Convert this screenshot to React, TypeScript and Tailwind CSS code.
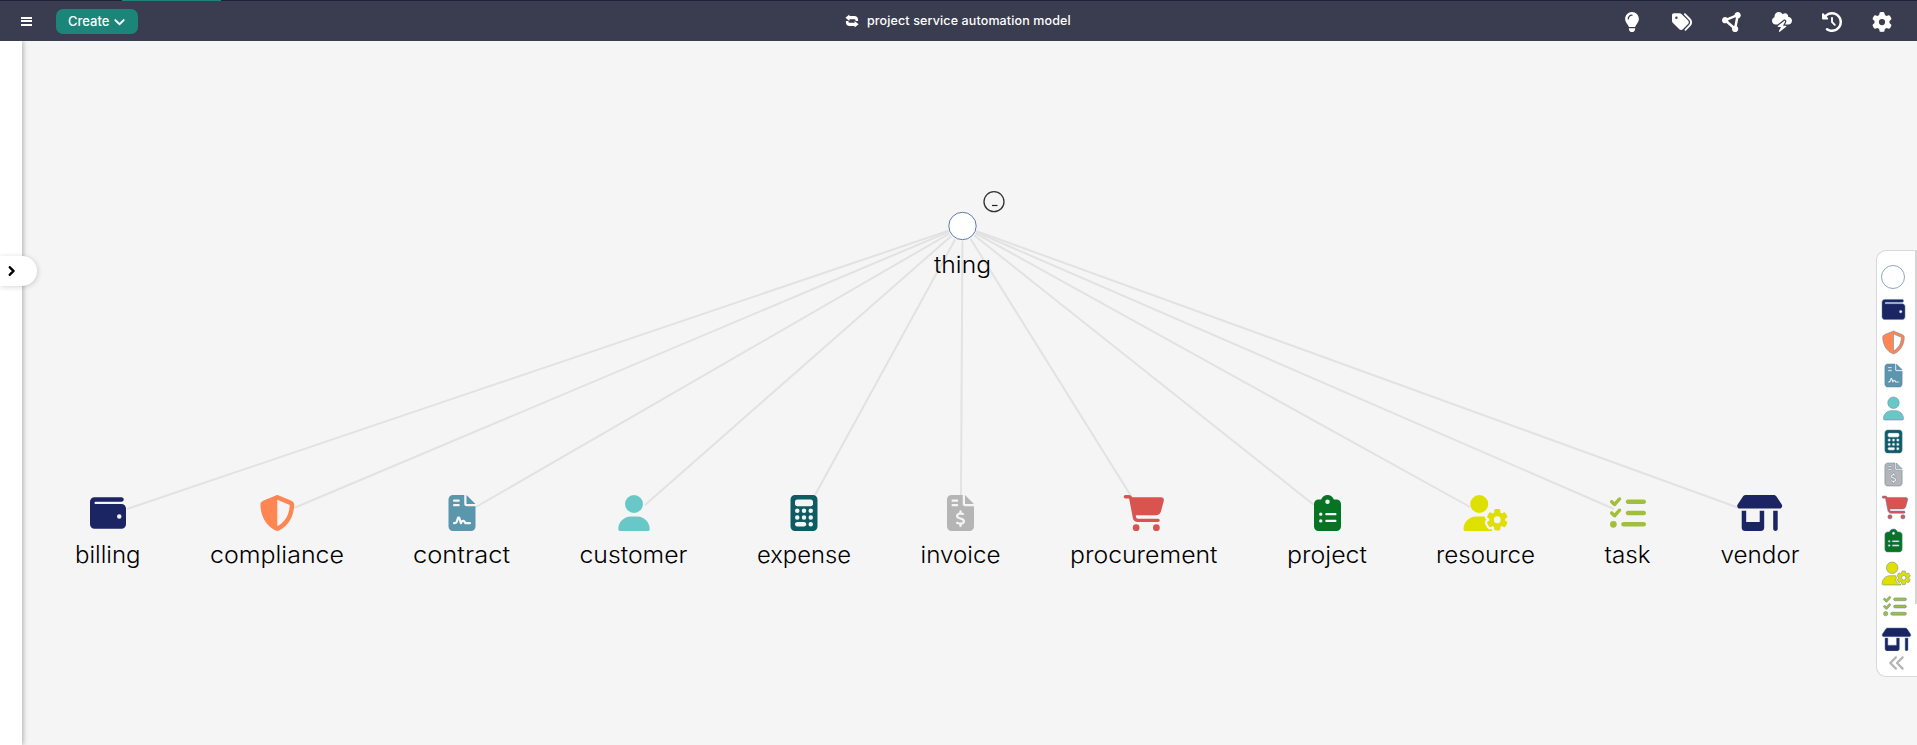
import React from "react";
import type { IconType } from "react-icons";
import {
  FaAnglesLeft, FaCalculator, FaCartShopping, FaChevronDown, FaChevronRight, FaCircleNodes,
  FaClipboardList, FaClockRotateLeft, FaCloudBolt, FaFileContract, FaFileInvoiceDollar, FaGear,
  FaLightbulb, FaListCheck, FaShieldHalved, FaShop, FaTags, FaUser, FaUserGear, FaWallet,
} from "react-icons/fa6";

type ModelNode = {
  label: string;
  icon: IconType;
  color: string;
  x: number;
  labelX: number;
  labelWidth: number;
  edge: [number, number];
};

const nodes: ModelNode[] = [
  { label: "billing", icon: FaWallet, color: "#1b2564", x: 108, labelX: 75, labelWidth: 65.5, edge: [127, 509] },
  { label: "compliance", icon: FaShieldHalved, color: "#ff8552", x: 277.3, labelX: 210, labelWidth: 134, edge: [294, 508] },
  { label: "contract", icon: FaFileContract, color: "#5a96ac", x: 462, labelX: 413, labelWidth: 97, edge: [476, 507] },
  { label: "customer", icon: FaUser, color: "#68c8c8", x: 634, labelX: 579.5, labelWidth: 108, edge: [645, 505] },
  { label: "expense", icon: FaCalculator, color: "#0e5c63", x: 804, labelX: 757, labelWidth: 94, edge: [815, 495] },
  { label: "invoice", icon: FaFileInvoiceDollar, color: "#b5b5b5", x: 960.5, labelX: 920.5, labelWidth: 80, edge: [961, 495] },
  { label: "procurement", icon: FaCartShopping, color: "#d9534f", x: 1144, labelX: 1070, labelWidth: 147.5, edge: [1131, 496] },
  { label: "project", icon: FaClipboardList, color: "#067423", x: 1327.5, labelX: 1287, labelWidth: 80, edge: [1314, 505] },
  { label: "resource", icon: FaUserGear, color: "#dfdf00", x: 1486, labelX: 1436, labelWidth: 99, edge: [1470, 507] },
  { label: "task", icon: FaListCheck, color: "#a2bf39", x: 1628, labelX: 1604.5, labelWidth: 46, edge: [1614, 509] },
  { label: "vendor", icon: FaShop, color: "#1b2564", x: 1759.7, labelX: 1720.5, labelWidth: 79, edge: [1739, 508] },
];

const tools: [string, IconType][] = [
  ["Insights", FaLightbulb],
  ["Tags", FaTags],
  ["Graph", FaCircleNodes],
  ["Events", FaCloudBolt],
  ["History", FaClockRotateLeft],
  ["Settings", FaGear],
];

function SwapIcon() {
  return (
    <svg viewBox="0 0 14 14" className="h-3.5 w-3.5 fill-white">
      <path d="M4.4 0.4v1.7h4.8a3.9 3.9 0 0 1 3.9 3.9v0.9h-2.5V6.4a1.2 1.2 0 0 0-1.2-1.2h-5v1.9L0.4 3.7z" />
      <path d="M9.6 13.6v-1.7H4.8A3.9 3.9 0 0 1 0.9 8V7.1h2.5v0.5a1.2 1.2 0 0 0 1.2 1.2h5V6.9l4 3.4z" />
    </svg>
  );
}

function Label({ text, x, y, width }: { text: string; x: number; y: number; width: number }) {
  return (
    <text x={x} y={y} textLength={width} lengthAdjust="spacingAndGlyphs" className="fill-black text-[23.5px] font-light">
      {text}
    </text>
  );
}

function Header() {
  return (
    <header className="relative z-10 flex h-[41px] shrink-0 flex-col bg-[#3a3d50] text-white">
      <div className="h-px shrink-0 bg-[#1f2138]">
        <div className="ml-[122px] h-px w-[99px] bg-[#1c857a]" />
      </div>
      <div className="grid flex-1 grid-cols-[845px_1fr_auto] items-center">
        <div className="flex items-center pl-[21px]">
          <button aria-label="Menu" className="flex w-[11px] flex-col gap-[1.5px]">
            <span className="h-[2px] bg-white" />
            <span className="h-[2px] bg-white" />
            <span className="h-[2px] bg-white" />
          </button>
          <button className="ml-6 flex h-[25px] w-[82px] items-center gap-[5px] rounded-[7px] bg-[#1c857a] pl-3 pt-px text-[13px] font-medium">
            <span>Create</span>
            <FaChevronDown className="h-[11px] w-[11px]" stroke="currentColor" strokeWidth={36} />
          </button>
        </div>
        <div className="flex items-center gap-2">
          <SwapIcon />
          <span className="whitespace-nowrap text-[12.5px] font-medium tracking-[0.13px]">project service automation model</span>
        </div>
        <nav className="flex items-center gap-[30px] pr-[25px]">
          {tools.map(([name, Icon]) => (
            <button key={name} aria-label={name} className="mt-0.5 flex h-5 w-5 items-center justify-center">
              <Icon className="h-5 w-5" />
            </button>
          ))}
        </nav>
      </div>
    </header>
  );
}

function Graph() {
  return (
    <svg viewBox="0 41 1917 704" className="block h-[704px] w-[1917px]">
      {nodes.map(({ label, edge: [x, y] }) => {
        const d = Math.hypot(x - 962.5, y - 226);
        return (
          <line
            key={label}
            x1={962.5 + ((x - 962.5) * 15) / d}
            y1={226 + ((y - 226) * 15) / d}
            x2={x}
            y2={y}
            stroke="#e2e2e2"
            strokeWidth="2"
          />
        );
      })}
      <circle cx="962.5" cy="226" r="13.7" fill="white" stroke="#5b7da6" />
      <circle cx="994" cy="201.7" r="10" fill="none" stroke="#333" strokeWidth="1.3" />
      <path d="M992 205.5h5.5" stroke="#222" strokeWidth="1.2" />
      <Label text="thing" x={934} y={272.5} width={57} />
      {nodes.map(({ label, icon: Icon, color, x, labelX, labelWidth }) => (
        <g key={label}>
          <Icon x={x - 30} y={495} className="h-9 w-[60px]" color={color} />
          <Label text={label} x={labelX} y={562.5} width={labelWidth} />
        </g>
      ))}
    </svg>
  );
}

function legendIconClass(icon: IconType) {
  if (icon === FaCartShopping) return "h-[23px] w-[26px] shrink-0 overflow-visible";
  if (icon === FaUserGear || icon === FaShop) return "h-[23px] w-[29px] shrink-0 overflow-visible";
  if (icon === FaListCheck) return "ml-px h-[23px] w-[24px] shrink-0 overflow-visible";
  return "h-[23px] w-[23px] shrink-0 overflow-visible";
}

function Legend() {
  return (
    <aside className="absolute right-0 top-[209px] flex h-[427px] w-[41px] flex-col overflow-hidden rounded-l-[10px] border border-r-0 border-[#d9d9d9] bg-white">
      <div className="flex h-[400px] shrink-0 justify-between overflow-hidden">
        <div className="flex w-[34px] flex-col items-start gap-[10px] pl-[5px] pt-[13.5px]">
          <div className="-ml-px -mb-[0.5px] h-6 w-6 shrink-0 rounded-full border border-[#8fa5be]" />
          {nodes.map(({ label, icon: Icon, color }) => (
            <Icon key={label} color={color} stroke="#5b7da6" strokeWidth={11} className={legendIconClass(Icon)} />
          ))}
        </div>
        <div className="h-[353px] w-[2px] shrink-0 bg-[#d4d4d4]" />
      </div>
      <button aria-label="Expand legend" className="flex justify-center pt-[3px]">
        <FaAnglesLeft className="h-[18px] w-[18px] text-[#b5b5b5]" />
      </button>
    </aside>
  );
}

export default function App() {
  return (
    <div className="flex h-[745px] w-full flex-col overflow-hidden bg-[#f5f5f5] font-['Inter','Noto_Sans',sans-serif]">
      <Header />
      <main className="relative flex flex-1">
        <div className="w-[22px] shrink-0 bg-white shadow-[1px_0_5px_rgba(0,0,0,0.3)]" />
        <div className="absolute left-0 top-0">
          <Graph />
        </div>
        <button
          aria-label="Open panel"
          className="absolute left-0 top-[215px] flex h-[30px] w-[37px] items-center rounded-r-full bg-white pl-[6px] shadow-[1px_1px_5px_rgba(60,40,70,0.2)]"
        >
          <FaChevronRight className="h-[10px] w-[10px] text-black" stroke="currentColor" strokeWidth={60} />
        </button>
        <Legend />
      </main>
    </div>
  );
}
